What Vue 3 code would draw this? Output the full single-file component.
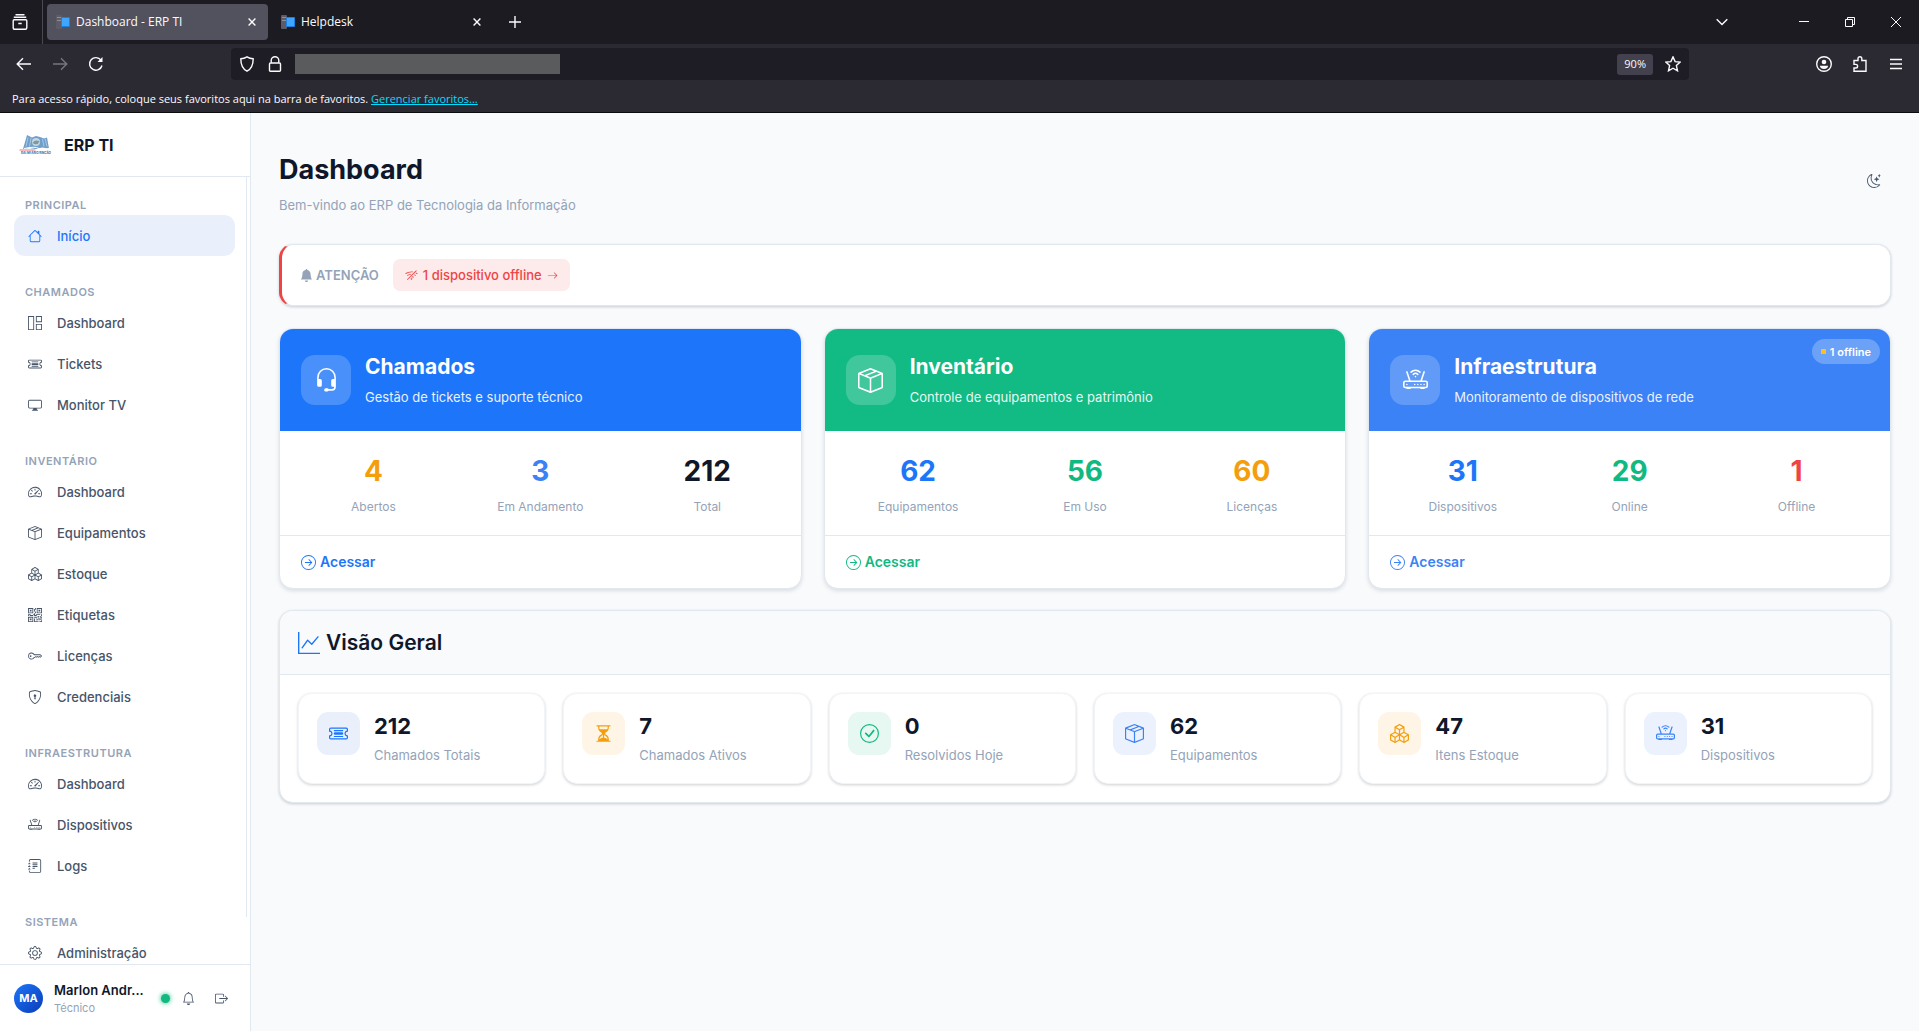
<script setup>
import { ref } from 'vue'

const icons = {
  house: 'M8.707 1.5a1 1 0 0 0-1.414 0L.646 8.146a.5.5 0 0 0 .708.708L2 8.207V13.5A1.5 1.5 0 0 0 3.5 15h9a1.5 1.5 0 0 0 1.5-1.5V8.207l.646.647a.5.5 0 0 0 .708-.708L13 5.793V2.5a.5.5 0 0 0-.5-.5h-1a.5.5 0 0 0-.5.5v1.293zM13 7.207V13.5a.5.5 0 0 1-.5.5h-9a.5.5 0 0 1-.5-.5V7.207l5-5z',
  layout: 'M0 0h7v16H0zM1 1v14h5V1zM9 0h7v7H9zM10 1v5h5V1zM9 9h7v7H9zM10 10v5h5v-5z',
  ticket: 'M4 5.5a.5.5 0 0 1 .5-.5h7a.5.5 0 0 1 0 1h-7a.5.5 0 0 1-.5-.5m0 5a.5.5 0 0 1 .5-.5h7a.5.5 0 0 1 0 1h-7a.5.5 0 0 1-.5-.5M5 7a1 1 0 0 0 0 2h6a1 1 0 1 0 0-2z M0 4.5A1.5 1.5 0 0 1 1.5 3h13A1.5 1.5 0 0 1 16 4.5V6a.5.5 0 0 1-.5.5 1.5 1.5 0 0 0 0 3 .5.5 0 0 1 .5.5v1.5a1.5 1.5 0 0 1-1.5 1.5h-13A1.5 1.5 0 0 1 0 11.5V10a.5.5 0 0 1 .5-.5 1.5 1.5 0 1 0 0-3A.5.5 0 0 1 0 6zM1.5 4a.5.5 0 0 0-.5.5v1.05a2.5 2.5 0 0 1 0 4.9v1.05a.5.5 0 0 0 .5.5h13a.5.5 0 0 0 .5-.5v-1.05a2.5 2.5 0 0 1 0-4.9V4.5a.5.5 0 0 0-.5-.5z',
  display: 'M0 4s0-2 2-2h12s2 0 2 2v6s0 2-2 2h-4q0 1 .25 1.5H11a.5.5 0 0 1 0 1H5a.5.5 0 0 1 0-1h.75Q6 13 6 12H2s-2 0-2-2zm1.398-.855a.76.76 0 0 0-.254.302A1.5 1.5 0 0 0 1 4.01V10c0 .325.078.502.145.602q.105.156.302.254a1.5 1.5 0 0 0 .538.143L2.01 11H14c.325 0 .502-.078.602-.145a.76.76 0 0 0 .254-.302 1.5 1.5 0 0 0 .143-.538L15 9.99V4c0-.325-.078-.502-.145-.602a.76.76 0 0 0-.302-.254A1.5 1.5 0 0 0 13.99 3H2c-.325 0-.502.078-.602.145',
  speedometer: 'M8 4a.5.5 0 0 1 .5.5V6a.5.5 0 0 1-1 0V4.5A.5.5 0 0 1 8 4M3.732 5.732a.5.5 0 0 1 .707 0l.915.914a.5.5 0 1 1-.708.708l-.914-.915a.5.5 0 0 1 0-.707M2 10a.5.5 0 0 1 .5-.5h1.586a.5.5 0 0 1 0 1H2.5A.5.5 0 0 1 2 10m9.5 0a.5.5 0 0 1 .5-.5h1.5a.5.5 0 0 1 0 1H12a.5.5 0 0 1-.5-.5m.754-4.246a.39.39 0 0 0-.527-.02L7.547 9.31a.91.91 0 1 0 1.302 1.258l3.434-4.297a.39.39 0 0 0-.029-.518z M0 10a8 8 0 1 1 15.547 2.661c-.442 1.253-1.845 1.602-2.932 1.25C11.309 13.488 9.475 13 8 13c-1.474 0-3.31.488-4.615.911-1.087.352-2.49.003-2.932-1.25A8 8 0 0 1 0 10m8-7a7 7 0 0 0-6.603 9.329c.203.575.923.876 1.68.63C4.397 12.533 6.358 12 8 12s3.604.532 4.923.96c.757.245 1.477-.056 1.68-.631A7 7 0 0 0 8 3',
  box: 'M8.186 1.113a.5.5 0 0 0-.372 0L1.846 3.5l2.404.961L10.404 2zm3.564 1.426L5.596 5 8 5.961 14.154 3.5zm3.25 1.7-6.5 2.6v7.922l6.5-2.6V4.24zM7.5 14.762V6.838L1 4.239v7.923zM7.443.184a1.5 1.5 0 0 1 1.114 0l7.129 2.852A.5.5 0 0 1 16 3.5v8.662a1 1 0 0 1-.629.928l-7.185 2.874a.5.5 0 0 1-.372 0L.63 13.09a1 1 0 0 1-.63-.928V3.5a.5.5 0 0 1 .314-.464z',
  boxes: 'M7.752.066a.5.5 0 0 1 .496 0l3.75 2.143a.5.5 0 0 1 .252.434v3.995l3.498 2A.5.5 0 0 1 16 9.07v4.286a.5.5 0 0 1-.252.434l-3.75 2.143a.5.5 0 0 1-.496 0l-3.502-2-3.502 2.001a.5.5 0 0 1-.496 0l-3.75-2.143A.5.5 0 0 1 0 13.357V9.071a.5.5 0 0 1 .252-.434L3.75 6.638V2.643a.5.5 0 0 1 .252-.434zM4.25 7.504 1.508 9.071l2.742 1.567 2.742-1.567zM7.5 9.933l-2.75 1.571v3.134l2.75-1.571zm1 3.134 2.75 1.571v-3.134L8.5 9.933zm.508-3.996 2.742 1.567 2.742-1.567-2.742-1.567zm2.242-2.433V3.504L8.5 5.076V8.21zM7.5 8.21V5.076L4.75 3.504v3.134zM5.258 2.643 8 4.21l2.742-1.567L8 1.076zM15 9.933l-2.75 1.571v3.134L15 13.067zM3.75 14.638v-3.134L1 9.933v3.134z',
  qr: 'M2 2h2v2H2z M6 0v6H0V0zM5 1H1v4h4zM4 12H2v2h2z M6 10v6H0v-6zm-5 1v4h4v-4zm11-9h2v2h-2z M10 0v6h6V0zm5 1v4h-4V1zM8 1V0h1v2H8v2H7V1zm0 5V4h1v2zM6 8V7h1V6h1v2h1V7h5v1h-4v1H7V8zm0 0v1H2V8H1v1H0V7h3v1zm10 1h-1V7h1zm-1 0h-1v2h2v-1h-1zm-4 0h2v1h-1v1h-1zm2 3v-1h-1v1h-1v1H9v1h3v-2zm0 0h3v1h-2v1h-1zm-4-1v1h1v-2H7v1z M7 12h1v3h4v1H7zm9 2v2h-3v-1h2v-1z',
  key: 'M0 8a4 4 0 0 1 7.465-2H14a.5.5 0 0 1 .354.146l1.5 1.5a.5.5 0 0 1 0 .708l-1.5 1.5a.5.5 0 0 1-.708 0L13 9.207l-.646.647a.5.5 0 0 1-.708 0L11 9.207l-.646.647a.5.5 0 0 1-.708 0L9 9.207l-.646.647A.5.5 0 0 1 8 10h-.535A4 4 0 0 1 0 8m4-3a3 3 0 1 0 2.712 4.285A.5.5 0 0 1 7.163 9h.63l.853-.854a.5.5 0 0 1 .708 0l.646.647.646-.647a.5.5 0 0 1 .708 0l.646.647.646-.647a.5.5 0 0 1 .708 0l.646.647.793-.793-1-1h-6.63a.5.5 0 0 1-.451-.285A3 3 0 0 0 4 5 M4 8a1 1 0 1 1-2 0 1 1 0 0 1 2 0',
  shieldLock: 'M5.338 1.59a61 61 0 0 0-2.837.856.48.48 0 0 0-.328.39c-.554 4.157.726 7.19 2.253 9.188a10.7 10.7 0 0 0 2.287 2.233c.346.244.652.42.893.533q.18.085.293.118a1 1 0 0 0 .101.025 1 1 0 0 0 .1-.025q.114-.034.294-.118c.24-.113.547-.29.893-.533a10.7 10.7 0 0 0 2.287-2.233c1.527-1.997 2.807-5.031 2.253-9.188a.48.48 0 0 0-.328-.39c-.651-.213-1.75-.56-2.837-.855C9.552 1.29 8.531 1.067 8 1.067c-.53 0-1.552.223-2.662.524zM5.072.56C6.157.265 7.31 0 8 0s1.843.265 2.928.56c1.11.3 2.229.655 2.887.87a1.54 1.54 0 0 1 1.044 1.262c.596 4.477-.787 7.795-2.465 9.99a11.8 11.8 0 0 1-2.517 2.453 7 7 0 0 1-1.048.625c-.28.132-.581.24-.829.24s-.548-.108-.829-.24a7 7 0 0 1-1.048-.625 11.8 11.8 0 0 1-2.517-2.453C1.928 10.487.545 7.169 1.141 2.692A1.54 1.54 0 0 1 2.185 1.43 63 63 0 0 1 5.072.56 M9.5 6.5a1.5 1.5 0 0 1-1 1.415l.385 1.99a.5.5 0 0 1-.491.595h-.788a.5.5 0 0 1-.49-.595l.384-1.99a1.5 1.5 0 1 1 2-1.415',
  router: 'M5.525 3.025a3.5 3.5 0 0 1 4.95 0 .5.5 0 1 0 .707-.707 4.5 4.5 0 0 0-6.364 0 .5.5 0 0 0 .707.707 M6.94 4.44a1.5 1.5 0 0 1 2.12 0 .5.5 0 0 0 .708-.708 2.5 2.5 0 0 0-3.536 0 .5.5 0 0 0 .707.707z M2.5 11a.5.5 0 1 1 0-1 .5.5 0 0 1 0 1m4.5-.5a.5.5 0 1 0 1 0 .5.5 0 0 0-1 0m2.5.5a.5.5 0 1 1 0-1 .5.5 0 0 1 0 1m1.5-.5a.5.5 0 1 0 1 0 .5.5 0 0 0-1 0m2 0a.5.5 0 1 0 1 0 .5.5 0 0 0-1 0 M2.974 2.342a.5.5 0 1 0-.948.316L3.806 8H1.5A1.5 1.5 0 0 0 0 9.5v2A1.5 1.5 0 0 0 1.5 13H2a.5.5 0 0 0 .5.5h2A.5.5 0 0 0 5 13h6a.5.5 0 0 0 .5.5h2a.5.5 0 0 0 .5-.5h.5a1.5 1.5 0 0 0 1.5-1.5v-2A1.5 1.5 0 0 0 14.5 8h-2.306l1.78-5.342a.5.5 0 1 0-.948-.316L11.14 8H4.86zM14.5 9a.5.5 0 0 1 .5.5v2a.5.5 0 0 1-.5.5h-13a.5.5 0 0 1-.5-.5v-2a.5.5 0 0 1 .5-.5z M8.5 5.5a.5.5 0 1 1-1 0 .5.5 0 0 1 1 0',
  journal: 'M5 10.5a.5.5 0 0 1 .5-.5h2a.5.5 0 0 1 0 1h-2a.5.5 0 0 1-.5-.5m0-2a.5.5 0 0 1 .5-.5h5a.5.5 0 0 1 0 1h-5a.5.5 0 0 1-.5-.5m0-2a.5.5 0 0 1 .5-.5h5a.5.5 0 0 1 0 1h-5a.5.5 0 0 1-.5-.5m0-2a.5.5 0 0 1 .5-.5h5a.5.5 0 0 1 0 1h-5a.5.5 0 0 1-.5-.5 M3 0h10a2 2 0 0 1 2 2v12a2 2 0 0 1-2 2H3a2 2 0 0 1-2-2v-1h1v1a1 1 0 0 0 1 1h10a1 1 0 0 0 1-1V2a1 1 0 0 0-1-1H3a1 1 0 0 0-1 1v1H1V2a2 2 0 0 1 2-2 M1 5v-.5a.5.5 0 0 1 1 0V5h.5a.5.5 0 0 1 0 1h-2a.5.5 0 0 1 0-1zm0 3v-.5a.5.5 0 0 1 1 0V8h.5a.5.5 0 0 1 0 1h-2a.5.5 0 0 1 0-1zm0 3v-.5a.5.5 0 0 1 1 0v.5h.5a.5.5 0 0 1 0 1h-2a.5.5 0 0 1 0-1z',
  gear: 'M8 4.754a3.246 3.246 0 1 0 0 6.492 3.246 3.246 0 0 0 0-6.492M5.754 8a2.246 2.246 0 1 1 4.492 0 2.246 2.246 0 0 1-4.492 0 M9.796 1.343c-.527-1.79-3.065-1.79-3.592 0l-.094.319a.873.873 0 0 1-1.255.52l-.292-.16c-1.64-.892-3.433.902-2.54 2.541l.159.292a.873.873 0 0 1-.52 1.255l-.319.094c-1.79.527-1.79 3.065 0 3.592l.319.094a.873.873 0 0 1 .52 1.255l-.16.292c-.892 1.64.901 3.434 2.541 2.54l.292-.159a.873.873 0 0 1 1.255.52l.094.319c.527 1.79 3.065 1.79 3.592 0l.094-.319a.873.873 0 0 1 1.255-.52l.292.16c1.64.893 3.434-.902 2.54-2.541l-.159-.292a.873.873 0 0 1 .52-1.255l.319-.094c1.79-.527 1.79-3.065 0-3.592l-.319-.094a.873.873 0 0 1-.52-1.255l.16-.292c.893-1.64-.902-3.433-2.541-2.54l-.292.159a.873.873 0 0 1-1.255-.52zm-2.633.283c.246-.835 1.428-.835 1.674 0l.094.319a1.873 1.873 0 0 0 2.693 1.115l.291-.16c.764-.415 1.6.42 1.184 1.185l-.159.292a1.873 1.873 0 0 0 1.116 2.692l.318.094c.835.246.835 1.428 0 1.674l-.319.094a1.873 1.873 0 0 0-1.115 2.693l.16.291c.415.764-.42 1.6-1.185 1.184l-.291-.159a1.873 1.873 0 0 0-2.693 1.116l-.094.318c-.246.835-1.428.835-1.674 0l-.094-.319a1.873 1.873 0 0 0-2.692-1.115l-.292.16c-.764.415-1.6-.42-1.184-1.185l.159-.291A1.873 1.873 0 0 0 1.945 8.93l-.319-.094c-.835-.246-.835-1.428 0-1.674l.319-.094A1.873 1.873 0 0 0 3.06 4.377l-.16-.292c-.415-.764.42-1.6 1.185-1.184l.292.159a1.873 1.873 0 0 0 2.692-1.115z',
  bell: 'M8 16a2 2 0 0 0 2-2H6a2 2 0 0 0 2 2M8 1.918l-.797.161A4 4 0 0 0 4 6c0 .628-.134 2.197-.459 3.742-.16.767-.376 1.566-.663 2.258h10.244c-.287-.692-.502-1.49-.663-2.258C12.134 8.197 12 6.628 12 6a4 4 0 0 0-3.203-3.92zM14.22 12c.223.447.481.801.78 1H1c.299-.199.557-.553.78-1C2.68 10.2 3 6.88 3 6c0-2.42 1.72-4.44 4.005-4.901a1 1 0 1 1 1.99 0A5 5 0 0 1 13 6c0 .88.32 4.2 1.22 6',
  bellFill: 'M8 16a2 2 0 0 0 2-2H6a2 2 0 0 0 2 2m.995-14.901a1 1 0 1 0-1.99 0A5 5 0 0 0 3 6c0 1.098-.5 6-2 7h14c-1.5-1-2-5.902-2-7 0-2.42-1.72-4.44-4.005-4.901',
  logout: 'M10 12.5a.5.5 0 0 1-.5.5h-8a.5.5 0 0 1-.5-.5v-9a.5.5 0 0 1 .5-.5h8a.5.5 0 0 1 .5.5v2a.5.5 0 0 0 1 0v-2A1.5 1.5 0 0 0 9.5 2h-8A1.5 1.5 0 0 0 0 3.5v9A1.5 1.5 0 0 0 1.5 14h8a1.5 1.5 0 0 0 1.5-1.5v-2a.5.5 0 0 0-1 0z M15.854 8.354a.5.5 0 0 0 0-.708l-3-3a.5.5 0 0 0-.708.708L14.293 7.5H5.5a.5.5 0 0 0 0 1h8.793l-2.147 2.146a.5.5 0 0 0 .708.708z',
  moon: 'M6 .278a.77.77 0 0 1 .08.858 7.2 7.2 0 0 0-.878 3.46c0 4.021 3.278 7.277 7.318 7.277q.792-.001 1.533-.16a.79.79 0 0 1 .81.316.73.73 0 0 1-.031.893A8.35 8.35 0 0 1 8.344 16C3.734 16 0 12.286 0 7.71 0 4.266 2.114 1.312 5.124.06A.75.75 0 0 1 6 .278M4.858 1.311A7.27 7.27 0 0 0 1.025 7.71c0 4.02 3.279 7.276 7.319 7.276a7.32 7.32 0 0 0 5.205-2.162q-.506.063-1.029.063c-4.61 0-8.343-3.714-8.343-8.29 0-1.167.242-2.278.681-3.286 M10.794 3.148a.217.217 0 0 1 .412 0l.387 1.162c.173.518.579.924 1.097 1.097l1.162.387a.217.217 0 0 1 0 .412l-1.162.387a1.73 1.73 0 0 0-1.097 1.097l-.387 1.162a.217.217 0 0 1-.412 0l-.387-1.162A1.73 1.73 0 0 0 9.31 6.593l-1.162-.387a.217.217 0 0 1 0-.412l1.162-.387a1.73 1.73 0 0 0 1.097-1.097zM13.863.099a.145.145 0 0 1 .274 0l.258.774c.115.346.386.617.732.732l.774.258a.145.145 0 0 1 0 .274l-.774.258a1.16 1.16 0 0 0-.732.732l-.258.774a.145.145 0 0 1-.274 0l-.258-.774a1.16 1.16 0 0 0-.732-.732l-.774-.258a.145.145 0 0 1 0-.274l.774-.258c.346-.115.617-.386.732-.732z',
  wifiOff: 'M10.706 3.294A12.6 12.6 0 0 0 8 3C5.259 3 2.723 3.882.663 5.379a.485.485 0 0 0-.048.736.52.52 0 0 0 .668.05A11.45 11.45 0 0 1 8 4q.946 0 1.852.148zM8 6c-1.905 0-3.68.56-5.166 1.526a.48.48 0 0 0-.063.745.525.525 0 0 0 .652.065 8.45 8.45 0 0 1 3.51-1.27zm2.596 1.404.785-.785q.947.362 1.785.907a.482.482 0 0 1 .063.745.525.525 0 0 1-.652.065 8.5 8.5 0 0 0-1.98-.932zM8 10l.933-.933a6.5 6.5 0 0 1 2.013.637c.285.145.326.524.1.75l-.015.015a.53.53 0 0 1-.611.09A5.5 5.5 0 0 0 8 10m4.905-4.905.747-.747q.886.451 1.685 1.03a.485.485 0 0 1 .047.737.52.52 0 0 1-.668.05 11.5 11.5 0 0 0-1.811-1.07M9.02 11.78c.238.14.236.464.04.66l-.707.706a.5.5 0 0 1-.707 0l-.707-.707c-.195-.195-.197-.518.04-.66A2 2 0 0 1 8 11.5c.374 0 .723.102 1.021.28zm4.355-9.905a.53.53 0 0 1 .75.75l-10.75 10.75a.53.53 0 0 1-.75-.75z',
  arrow: 'M1 8a.5.5 0 0 1 .5-.5h11.793l-3.147-3.146a.5.5 0 0 1 .708-.708l4 4a.5.5 0 0 1 0 .708l-4 4a.5.5 0 0 1-.708-.708L13.293 8.5H1.5A.5.5 0 0 1 1 8',
  arrowCircle: 'M1 8a7 7 0 1 0 14 0A7 7 0 0 0 1 8m15 0A8 8 0 1 1 0 8a8 8 0 0 1 16 0M4.5 7.5a.5.5 0 0 0 0 1h5.793l-2.147 2.146a.5.5 0 0 0 .708.708l3-3a.5.5 0 0 0 0-.708l-3-3a.5.5 0 1 0-.708.708L10.293 7.5z',
  headset: 'M8 1a5 5 0 0 0-5 5v1h1a1 1 0 0 1 1 1v3a1 1 0 0 1-1 1H3a1 1 0 0 1-1-1V6a6 6 0 1 1 12 0v6a2.5 2.5 0 0 1-2.5 2.5H9.366a1 1 0 0 1-.866.5h-1a1 1 0 1 1 0-2h1a1 1 0 0 1 .866.5H11.5A1.5 1.5 0 0 0 13 12h-1a1 1 0 0 1-1-1V8a1 1 0 0 1 1-1h1V6a5 5 0 0 0-5-5',
  hourglass: 'M2.5 15a.5.5 0 1 1 0-1h1v-1a4.5 4.5 0 0 1 2.557-4.06c.29-.139.443-.377.443-.59v-.7c0-.213-.154-.451-.443-.59A4.5 4.5 0 0 1 3.5 3V2h-1a.5.5 0 0 1 0-1h11a.5.5 0 0 1 0 1h-1v1a4.5 4.5 0 0 1-2.557 4.06c-.29.139-.443.377-.443.59v.7c0 .213.154.451.443.59A4.5 4.5 0 0 1 12.5 13v1h1a.5.5 0 0 1 0 1zm2-13v1c0 .537.12 1.045.337 1.5h6.326c.216-.455.337-.963.337-1.5V2zm3 6.35c0 .701-.478 1.236-1.011 1.492A3.5 3.5 0 0 0 4.5 13s.866-1.299 3-1.48zm1 0v3.17c2.134.181 3 1.48 3 1.48a3.5 3.5 0 0 0-1.989-3.158C8.978 9.586 8.5 9.052 8.5 8.351z',
  check: 'M8 15A7 7 0 1 1 8 1a7 7 0 0 1 0 14m0 1A8 8 0 1 0 8 0a8 8 0 0 0 0 16 M10.97 4.97a.235.235 0 0 0-.02.022L7.477 9.417 5.384 7.323a.75.75 0 0 0-1.06 1.06L6.97 11.03a.75.75 0 0 0 1.079-.02l3.992-4.99a.75.75 0 0 0-1.071-1.05z',
  graph: 'M0 0h1v15h15v1H0zm14.817 3.113a.5.5 0 0 1 .07.704l-4.5 5.5a.5.5 0 0 1-.74.037L7.06 6.767l-3.656 5.027a.5.5 0 0 1-.808-.588l4-5.5a.5.5 0 0 1 .758-.06l2.609 2.61 4.15-5.073a.5.5 0 0 1 .704-.07'
}

const tabs = [
  { id: 1, title: 'Dashboard - ERP TI' },
  { id: 2, title: 'Helpdesk' }
]
const activeTab = ref(1)

const sections = [
  { title: 'Principal', items: [{ label: 'Início', icon: 'house' }] },
  {
    title: 'Chamados',
    items: [
      { label: 'Dashboard', icon: 'layout' },
      { label: 'Tickets', icon: 'ticket' },
      { label: 'Monitor TV', icon: 'display' }
    ]
  },
  {
    title: 'Inventário',
    items: [
      { label: 'Dashboard', icon: 'speedometer' },
      { label: 'Equipamentos', icon: 'box' },
      { label: 'Estoque', icon: 'boxes' },
      { label: 'Etiquetas', icon: 'qr' },
      { label: 'Licenças', icon: 'key' },
      { label: 'Credenciais', icon: 'shieldLock' }
    ]
  },
  {
    title: 'Infraestrutura',
    items: [
      { label: 'Dashboard', icon: 'speedometer' },
      { label: 'Dispositivos', icon: 'router' },
      { label: 'Logs', icon: 'journal' }
    ]
  },
  { title: 'Sistema', items: [{ label: 'Administração', icon: 'gear' }] }
]
const activeItem = ref('Início')

const modules = [
  {
    name: 'Chamados',
    description: 'Gestão de tickets e suporte técnico',
    icon: 'headset',
    color: 'primary',
    stats: [
      { value: 4, label: 'Abertos', color: 'warning' },
      { value: 3, label: 'Em Andamento', color: 'info' },
      { value: 212, label: 'Total', color: 'dark' }
    ]
  },
  {
    name: 'Inventário',
    description: 'Controle de equipamentos e patrimônio',
    icon: 'box',
    color: 'success',
    stats: [
      { value: 62, label: 'Equipamentos', color: 'primary' },
      { value: 56, label: 'Em Uso', color: 'success' },
      { value: 60, label: 'Licenças', color: 'warning' }
    ]
  },
  {
    name: 'Infraestrutura',
    description: 'Monitoramento de dispositivos de rede',
    icon: 'router',
    color: 'info',
    badge: '1 offline',
    stats: [
      { value: 31, label: 'Dispositivos', color: 'primary' },
      { value: 29, label: 'Online', color: 'success' },
      { value: 1, label: 'Offline', color: 'danger' }
    ]
  }
]

const overview = [
  { value: 212, label: 'Chamados Totais', icon: 'ticket', color: 'primary' },
  { value: 7, label: 'Chamados Ativos', icon: 'hourglass', color: 'warning' },
  { value: 0, label: 'Resolvidos Hoje', icon: 'check', color: 'success' },
  { value: 62, label: 'Equipamentos', icon: 'box', color: 'info' },
  { value: 47, label: 'Itens Estoque', icon: 'boxes', color: 'warning' },
  { value: 31, label: 'Dispositivos', icon: 'router', color: 'info' }
]
</script>

<template>
  <div class="window">
    <!-- Browser -->
    <header class="browser">
      <div class="tab-bar">
        <button class="chrome-btn recent" aria-label="Firefox View">
          <svg class="line" viewBox="0 0 16 16"><path d="M3.5.8h9M1.8 3.3h12.4M2.2 5.8h11.6q1 0 1 1v7q0 1.5-1.5 1.5H2.7q-1.5 0-1.5-1.5v-7q0-1 1-1zM6.3 9.5h3.4" /></svg>
        </button>
        <div class="tabs">
          <div v-for="tab in tabs" :key="tab.id" class="tab" :class="{ active: tab.id === activeTab }" @click="activeTab = tab.id">
            <svg class="favicon" viewBox="0 0 14 14">
              <rect x="0" y="0" width="6" height="14" rx="1" fill="#5d5c66" />
              <rect x="1" y="2" width="4" height="1" fill="#8f8e99" />
              <rect x="1" y="5" width="4" height="1" fill="#8f8e99" />
              <rect x="5" y="2" width="9" height="10" rx="1" fill="#1f7fe0" />
              <rect x="6" y="3" width="7" height="8" fill="#3ea6ff" />
            </svg>
            <span class="tab-title">{{ tab.title }}</span>
            <button class="tab-close" aria-label="Fechar aba">
              <svg class="line" viewBox="0 0 8 8"><path d="M.6.6l6.8 6.8M7.4.6L.6 7.4" /></svg>
            </button>
          </div>
          <button class="chrome-btn" aria-label="Nova aba">
            <svg class="line plus" viewBox="0 0 12 12"><path d="M6 0v12M0 6h12" /></svg>
          </button>
        </div>
        <button class="chrome-btn tab-list" aria-label="Listar abas">
          <svg class="line chevron" viewBox="0 0 12 8"><path d="M.7 1.2L6 6.5l5.3-5.3" /></svg>
        </button>
        <div class="window-controls">
          <button class="chrome-btn" aria-label="Minimizar">
            <svg class="line thin" viewBox="0 0 10 10"><path d="M0 4.5h10" /></svg>
          </button>
          <button class="chrome-btn" aria-label="Restaurar">
            <svg class="line thin" viewBox="0 0 10 10"><path d="M.5 2.5h7v7h-7zM2.5 2.5v-2h7v7h-2" /></svg>
          </button>
          <button class="chrome-btn" aria-label="Fechar">
            <svg class="line thin" viewBox="0 0 10 10"><path d="M0 0l10 10M10 0L0 10" /></svg>
          </button>
        </div>
      </div>

      <div class="nav-bar">
        <div class="nav-buttons">
          <button class="chrome-btn" aria-label="Voltar">
            <svg class="line" viewBox="0 0 16 16"><path d="M15 8H1.5M7 2.2L1.2 8 7 13.8" /></svg>
          </button>
          <button class="chrome-btn disabled" aria-label="Avançar" disabled>
            <svg class="line" viewBox="0 0 16 16"><path d="M1 8h13.5M9 2.2L14.8 8 9 13.8" /></svg>
          </button>
          <button class="chrome-btn" aria-label="Recarregar">
            <svg class="line" viewBox="0 0 16 16"><path d="M14 9.5A6.3 6.3 0 1 1 13 4.2" /><path d="M14.5 1v5H9.5z" fill="currentColor" stroke="none" /></svg>
          </button>
        </div>
        <div class="url-bar">
          <svg class="line" viewBox="0 0 16 16"><path d="M8 .8c2 1.2 4 1.8 6.2 2C14.2 9 12.5 13 8 15.2 3.5 13 1.8 9 1.8 2.8 4 2.6 6 2 8 .8z" /></svg>
          <svg class="line lock" viewBox="0 0 16 16"><path d="M4.2 7V4.500a3.800 3.800 0 0 1 7.600 0V7M3.500 7h9q1 0 1 1v6.200q0 1-1 1h-9q-1 0-1-1V8q0-1 1-1z" /></svg>
          <span class="redacted"></span>
          <input class="url-input" type="text" aria-label="Endereço" />
          <button class="zoom-level">90%</button>
          <button class="star" aria-label="Adicionar aos favoritos">
            <svg class="line" viewBox="0 0 16 16"><path d="M8 .9l2.1 4.7 5.1.5-3.8 3.5 1.1 5.2L8 12.2l-4.5 2.6 1.1-5.2L.8 6.1l5.1-.5z" /></svg>
          </button>
        </div>
        <div class="nav-buttons">
          <button class="chrome-btn" aria-label="Conta">
            <svg class="line" viewBox="0 0 16 16"><circle cx="8" cy="8" r="7.3" /><circle cx="8" cy="6" r="2.3" fill="currentColor" stroke="none" /><path d="M3.8 9.800h8.400Q11.500 13 8 13T3.800 9.800z" fill="currentColor" stroke="none" /></svg>
          </button>
          <button class="chrome-btn" aria-label="Extensões">
            <svg class="line" viewBox="0 0 16 16"><path d="M2 4.500h4V2.600a1.900 1.900 0 0 1 3.800 0v1.900H14v10.700H2V12h1.800a1.700 1.700 0 0 0 0-3.600H2z" /></svg>
          </button>
          <button class="chrome-btn" aria-label="Menu">
            <svg class="line menu" viewBox="0 0 12 12"><path d="M0 1.500h12M0 6h12M0 10.500h12" /></svg>
          </button>
        </div>
      </div>

      <div class="bookmarks">
        Para acesso rápido, coloque seus favoritos aqui na barra de favoritos.
        <a href="#">Gerenciar favoritos...</a>
      </div>
    </header>

    <div class="app">
      <!-- Sidebar -->
      <aside class="sidebar">
        <div class="brand">
          <svg class="logo" viewBox="0 0 72 40">
            <path d="M18 0l10 5 8-3 8 2 8 3 6-2 4 22-14-2-12 3-14-2-12 2z" fill="#6f9fca" />
            <path d="M20 5l-4 18M26 6l-3 17M54 7l4 16M49 8l3 15" stroke="#a9c8e2" stroke-width="2" />
            <circle cx="36" cy="14" r="8" fill="#c5d6e0" />
            <path d="M29 16q6-8 14-3-4 9-14 3z" fill="#7f97a3" />
            <path d="M12 27q22-5 30 0t22-1" stroke="#fff" stroke-width="2" fill="none" />
            <path d="M3 30h32" stroke="#ee7777" stroke-width="2" />
            <text x="36" y="38" text-anchor="middle" class="logo-text">BALNEÁRIO RINCÃO</text>
          </svg>
          <span class="brand-name">ERP TI</span>
        </div>

        <div class="nav-wrap">
          <nav class="menu-list">
            <section v-for="section in sections" :key="section.title" class="menu-section">
              <h2 class="menu-title">{{ section.title }}</h2>
              <a
                v-for="item in section.items"
                :key="item.label"
                href="#"
                class="menu-item"
                :class="{ active: item.label === activeItem }"
                @click.prevent="activeItem = item.label">
                <svg class="bi" viewBox="0 0 16 16"><path :d="icons[item.icon]" /></svg>
                <span>{{ item.label }}</span>
              </a>
            </section>
          </nav>
        </div>

        <div class="user">
          <span class="avatar">MA</span>
          <div class="user-info">
            <div class="user-name">Marlon Andr...</div>
            <div class="user-role">Técnico</div>
          </div>
          <span class="status-dot"></span>
          <button class="icon-btn" aria-label="Notificações">
            <svg class="bi small" viewBox="0 0 16 16"><path :d="icons.bell" /></svg>
          </button>
          <button class="icon-btn" aria-label="Sair">
            <svg class="bi small" viewBox="0 0 16 16"><path :d="icons.logout" /></svg>
          </button>
        </div>
      </aside>

      <!-- Content -->
      <main class="content">
        <div class="page-header">
          <div>
            <h1>Dashboard</h1>
            <p>Bem-vindo ao ERP de Tecnologia da Informação</p>
          </div>
          <button class="icon-btn theme" aria-label="Alternar tema">
            <svg class="bi" viewBox="0 0 16 16"><path :d="icons.moon" /></svg>
          </button>
        </div>

        <div class="alert">
          <span class="alert-title">
            <svg class="bi small" viewBox="0 0 16 16"><path :d="icons.bellFill" /></svg>
            ATENÇÃO
          </span>
          <a href="#" class="alert-chip">
            <svg class="bi small" viewBox="0 0 16 16"><path :d="icons.wifiOff" /></svg>
            <span>1 dispositivo offline</span>
            <svg class="bi tiny" viewBox="0 0 16 16"><path :d="icons.arrow" /></svg>
          </a>
        </div>

        <div class="modules">
          <article v-for="mod in modules" :key="mod.name" class="module">
            <div class="module-header" :class="'bg-' + mod.color">
              <span class="module-icon">
                <svg class="bi large" viewBox="0 0 16 16"><path :d="icons[mod.icon]" /></svg>
              </span>
              <div>
                <h3>{{ mod.name }}</h3>
                <p>{{ mod.description }}</p>
              </div>
              <span v-if="mod.badge" class="badge">{{ mod.badge }}</span>
            </div>
            <div class="module-stats">
              <div v-for="stat in mod.stats" :key="stat.label" class="stat">
                <div class="stat-value" :class="'text-' + stat.color">{{ stat.value }}</div>
                <div class="stat-label">{{ stat.label }}</div>
              </div>
            </div>
            <div class="module-footer">
              <a href="#" :class="'text-' + mod.color">
                <svg class="bi medium" viewBox="0 0 16 16"><path :d="icons.arrowCircle" /></svg>
                <span>Acessar</span>
              </a>
            </div>
          </article>
        </div>

        <section class="overview">
          <div class="overview-header">
            <svg class="bi graph" viewBox="0 0 16 16"><path :d="icons.graph" /></svg>
            <h2>Visão Geral</h2>
          </div>
          <div class="overview-grid">
            <div v-for="item in overview" :key="item.label" class="overview-card">
              <span class="overview-icon" :class="'soft-' + item.color">
                <svg class="bi normal" viewBox="0 0 16 16"><path :d="icons[item.icon]" /></svg>
              </span>
              <div>
                <div class="overview-value">{{ item.value }}</div>
                <div class="overview-label">{{ item.label }}</div>
              </div>
            </div>
          </div>
        </section>
      </main>
    </div>
  </div>
</template>

<style>
body {
  margin: 0;
  background: #f8fafc;
}
</style>

<style scoped>
.window {
  display: flex;
  flex-direction: column;
  height: 100vh;
  font-family: Inter, "Liberation Sans", sans-serif;
  font-size: 13px;
  line-height: 20px;
  color: #0f172a;
}

.window *,
.window *::before,
.window *::after {
  box-sizing: border-box;
}

h1, h2, h3, p {
  margin: 0;
}

a {
  color: inherit;
  text-decoration: none;
}

button {
  padding: 0;
  border: none;
  background: none;
  color: inherit;
  font: inherit;
  cursor: pointer;
}

svg {
  display: block;
  flex: none;
}

.bi {
  width: 14px;
  height: 14px;
  fill: currentColor;
}

.bi.tiny {
  width: 11px;
  height: 11px;
}

.bi.small {
  width: 13px;
  height: 13px;
}

.bi.medium {
  width: 15px;
  height: 15px;
}

.bi.normal {
  width: 19px;
  height: 19px;
}

.bi.graph {
  width: 22px;
  height: 22px;
}

.bi.large {
  width: 25px;
  height: 25px;
}

/* Browser */
.browser {
  flex: none;
  background: #2b2a33;
  border-bottom: 1px solid #0c0c0d;
  color: #fbfbfe;
  font-family: "Open Sans", "Noto Sans", sans-serif;
  font-size: 12px;
}

.line {
  width: 16px;
  height: 16px;
  fill: none;
  stroke: currentColor;
  stroke-width: 1.4;
}

.line.plus,
.line.menu {
  width: 12px;
  height: 12px;
}

.line.chevron {
  width: 12px;
  height: 8px;
}

.line.thin {
  width: 10px;
  height: 10px;
  stroke-width: 1;
}

.chrome-btn {
  display: flex;
  align-items: center;
  justify-content: center;
  width: 36px;
  height: 36px;
}

.disabled {
  color: #77767e;
}

.tab-bar {
  display: flex;
  align-items: center;
  height: 44px;
  background: #1c1b22;
}

.recent {
  width: 43px;
  height: 44px;
  padding-right: 3px;
  border-right: 1px solid #4a4953;
}

.tabs {
  display: flex;
  align-items: center;
  gap: 4px;
  flex: 1;
  padding-left: 4px;
}

.tab {
  display: flex;
  align-items: center;
  width: 221px;
  height: 36px;
  padding: 0 8px 0 9px;
  border-radius: 4px;
}

.tab.active {
  background: #52515e;
}

.favicon {
  width: 14px;
  height: 14px;
}

.tab-title {
  flex: 1;
  margin-left: 6px;
}

.tab-close {
  padding: 4px;
}

.tab-close .line {
  width: 8px;
  height: 8px;
}

.window-controls {
  display: flex;
  margin-left: 41px;
}

.window-controls .chrome-btn {
  width: 46px;
}

.nav-bar {
  display: flex;
  align-items: center;
  height: 40px;
  padding: 0 5px 0 6px;
}

.nav-buttons {
  display: flex;
}

.url-bar {
  display: flex;
  align-items: center;
  flex: 1;
  height: 32px;
  margin: 0 117px;
  padding: 0 8px;
  border-radius: 4px;
  background: #1e1d25;
}

.url-bar .lock {
  margin: 0 12px;
}

.redacted {
  width: 265px;
  height: 20px;
  background: #5a5b5c;
}

.url-input {
  flex: 1;
  border: none;
  outline: none;
  background: transparent;
  color: inherit;
  font: inherit;
}

.zoom-level {
  height: 21px;
  padding: 0 7px;
  border-radius: 3px;
  background: #42414d;
  font-size: 11px;
}

.star {
  margin-left: 12px;
}

.bookmarks {
  height: 28px;
  padding: 5px 12px;
  font-size: 11px;
}

.bookmarks a {
  color: #00ddff;
  text-decoration: underline;
}

/* Sidebar */
.app {
  display: flex;
  flex: 1;
  min-height: 0;
}

.sidebar {
  display: flex;
  flex-direction: column;
  flex: none;
  width: 251px;
  border-right: 1px solid #e2e8f0;
  background: #fff;
}

.brand {
  display: flex;
  align-items: center;
  gap: 10px;
  height: 64px;
  padding: 0 18px;
  border-bottom: 1px solid #e2e8f0;
}

.logo {
  width: 36px;
  height: 20px;
}

.logo-text {
  font-size: 6px;
  font-weight: 700;
  fill: #2c6ca8;
}

.brand-name {
  font-size: 16px;
  font-weight: 700;
}

.nav-wrap {
  position: relative;
  flex: 1;
  min-height: 0;
}

/* scrollbar thumb */
.nav-wrap::after {
  content: "";
  position: absolute;
  top: 0;
  right: 3px;
  width: 1px;
  height: 94%;
  background: #e2e8f0;
}

.menu-list {
  display: flex;
  flex-direction: column;
  gap: 28px;
  height: 100%;
  padding: 20px 15px 0 14px;
  overflow-y: auto;
  scrollbar-width: none;
}

.menu-title {
  margin-bottom: 2px;
  padding-left: 11px;
  font-size: 11px;
  line-height: 16px;
  font-weight: 600;
  letter-spacing: 0.5px;
  text-transform: uppercase;
  color: #94a3b8;
}

.menu-item {
  display: flex;
  align-items: center;
  gap: 15px;
  height: 41px;
  padding: 0 14px;
  border-radius: 11px;
  font-weight: 500;
  color: #475569;
}

.menu-item.active {
  background: #e9f0fc;
  color: #1d75f9;
}

.user {
  display: flex;
  align-items: center;
  height: 67px;
  padding: 0 22px 0 14px;
  border-top: 1px solid #e2e8f0;
}

.avatar {
  display: flex;
  align-items: center;
  justify-content: center;
  width: 29px;
  height: 29px;
  border-radius: 50%;
  background: linear-gradient(135deg, #1d75f9, #0a3db8);
  color: #fff;
  font-size: 11px;
  font-weight: 700;
}

.user-info {
  flex: 1;
  margin-left: 11px;
  white-space: nowrap;
}

.user-name {
  font-weight: 600;
}

.user-role {
  font-size: 11px;
  line-height: 16px;
  color: #94a3b8;
}

.status-dot {
  width: 9px;
  height: 9px;
  margin-right: 12px;
  border-radius: 50%;
  background: #10b981;
  box-shadow: 0 0 5px #10b981;
}

.icon-btn {
  color: #475569;
}

.icon-btn + .icon-btn {
  margin-left: 20px;
}

/* Content */
.content {
  flex: 1;
  min-width: 0;
  padding: 39px 28px;
  overflow-y: auto;
  background: #f8fafc;
}

.page-header {
  display: flex;
  align-items: center;
  justify-content: space-between;
  margin-bottom: 29px;
}

.page-header h1 {
  font-size: 27px;
  line-height: 36px;
  font-weight: 700;
}

.page-header p {
  margin-top: 7px;
  color: #94a3b8;
}

.theme {
  padding: 5px 10px 10px;
}

.alert {
  display: flex;
  align-items: center;
  gap: 14px;
  margin-bottom: 22px;
  padding: 14px 18px;
  border: 1px solid #e2e8f0;
  border-left: 3px solid #ef4444;
  border-radius: 14px;
  background: #fff;
  box-shadow: 0 1px 3px rgba(15, 23, 42, 0.2);
}

.alert-title {
  display: flex;
  align-items: center;
  gap: 3px;
  font-weight: 600;
  color: #94a3b8;
}

.alert-chip {
  display: flex;
  align-items: center;
  gap: 5px;
  height: 32px;
  padding: 0 12px;
  border-radius: 7px;
  background: #fdebeb;
  font-weight: 500;
  color: #ef4444;
}

.modules {
  display: grid;
  grid-template-columns: repeat(3, 1fr);
  gap: 22px;
  margin-bottom: 21px;
}

.module {
  border: 1px solid #e2e8f0;
  border-radius: 14px;
  background: #fff;
  box-shadow: 0 2px 4px rgba(15, 23, 42, 0.12);
  overflow: hidden;
}

.module-header {
  position: relative;
  display: flex;
  align-items: center;
  gap: 14px;
  padding: 24px 21px;
  color: #fff;
}

.module-icon {
  display: flex;
  align-items: center;
  justify-content: center;
  width: 50px;
  height: 50px;
  border-radius: 14px;
  background: rgba(255, 255, 255, 0.2);
}

.module-header h3 {
  font-size: 21px;
  line-height: 28px;
  font-weight: 700;
}

.module-header p {
  margin-top: 6px;
  opacity: 0.9;
}

.badge {
  position: absolute;
  top: 10px;
  right: 10px;
  display: flex;
  align-items: center;
  gap: 4px;
  height: 25px;
  padding: 0 9px;
  border-radius: 13px;
  background: rgba(255, 255, 255, 0.25);
  font-size: 11px;
  font-weight: 600;
}

.badge::before {
  content: "";
  width: 5px;
  height: 5px;
  background: #fbbf24;
}

.module-stats {
  display: grid;
  grid-template-columns: repeat(3, 1fr);
  gap: 22px;
  padding: 22px 21px 18px;
  text-align: center;
}

.stat-value {
  margin-bottom: 8px;
  font-size: 28px;
  line-height: 36px;
  font-weight: 700;
}

.stat-label {
  font-size: 12px;
  color: #94a3b8;
}

.module-footer {
  padding: 15px 21px;
  border-top: 1px solid #e2e8f0;
}

.module-footer a {
  display: flex;
  align-items: center;
  gap: 4px;
  font-size: 14px;
  line-height: 22px;
  font-weight: 600;
}

.overview {
  border: 1px solid #e2e8f0;
  border-radius: 14px;
  background: #fff;
  box-shadow: 0 1px 3px rgba(15, 23, 42, 0.2);
  overflow: hidden;
}

.overview-header {
  display: flex;
  align-items: center;
  gap: 6px;
  height: 64px;
  padding: 0 18px;
  border-bottom: 1px solid #e2e8f0;
  background: #f8fafc;
}

.overview-header .bi {
  color: #1d75f9;
}

.overview-header h2 {
  font-size: 21px;
  line-height: 28px;
  font-weight: 600;
}

.overview-grid {
  display: grid;
  grid-template-columns: repeat(6, 1fr);
  gap: 18px;
  padding: 18px;
}

.overview-card {
  display: flex;
  align-items: flex-start;
  gap: 14px;
  padding: 18px;
  border: 1px solid #f1f5f9;
  border-radius: 14px;
  background: #fff;
  box-shadow: 0 1px 3px rgba(15, 23, 42, 0.2);
}

.overview-icon {
  display: flex;
  align-items: center;
  justify-content: center;
  width: 43px;
  height: 43px;
  border-radius: 11px;
}

.overview-value {
  margin-bottom: 5px;
  font-size: 22px;
  line-height: 28px;
  font-weight: 700;
}

.overview-label {
  color: #94a3b8;
}

/* Colors */
.bg-primary { background: #1d75f9; }
.bg-success { background: #12ba84; }
.bg-info { background: #3b82f6; }

.text-primary { color: #1d75f9; }
.text-success { color: #10b981; }
.text-info { color: #3b82f6; }
.text-warning { color: #f59e0b; }
.text-danger { color: #ef4444; }
.text-dark { color: #0f172a; }

.soft-primary { background: #e9f0fc; color: #1d75f9; }
.soft-success { background: #e7f7f1; color: #10b981; }
.soft-info { background: #ebf2fe; color: #3b82f6; }
.soft-warning { background: #fef5e7; color: #f59e0b; }
</style>
